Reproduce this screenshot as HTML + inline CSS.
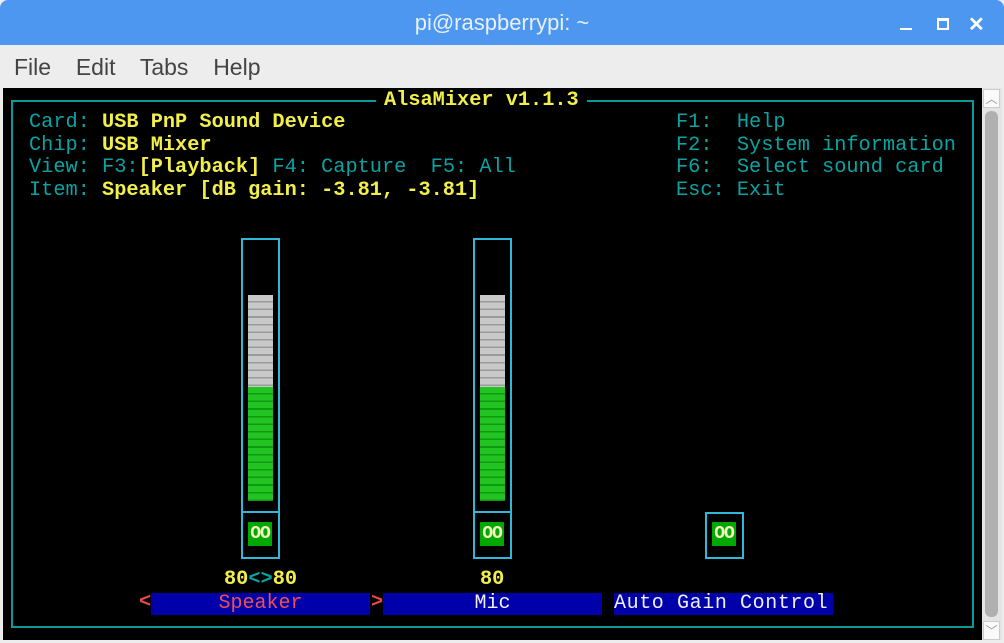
<!DOCTYPE html>
<html><head><meta charset="utf-8"><style>
*{margin:0;padding:0;box-sizing:border-box}
body{width:1004px;height:643px;position:relative;overflow:hidden;background:#ededed;font-family:"Liberation Sans",sans-serif}
.a{position:absolute}
.t{position:absolute;font-family:"Liberation Mono",monospace;font-size:20.3px;line-height:22.7px;white-space:pre}
.c{color:#0aa3a3}.y{color:#f2ee4a;font-weight:bold}
.box{position:absolute;border:2px solid #2fb8d8}
.gray{position:absolute;background:repeating-linear-gradient(to bottom,#c9c9c9 0,#c9c9c9 6px,#9a9a9a 6px,#9a9a9a 7.6px)}
.green{position:absolute;background:repeating-linear-gradient(to bottom,#22c422 0,#22c422 6px,#119911 6px,#119911 7.6px)}
.oo{position:absolute;background:#00a800;color:#f4f4c0;font-family:"Liberation Mono",monospace;font-size:18px;font-weight:bold;text-align:center;line-height:24px;width:24px;height:24px;letter-spacing:-1px}
.lbl{position:absolute;background:#0000aa;height:22px;font-family:"Liberation Mono",monospace;font-size:20px;line-height:22px;color:#f0f0f0;text-align:center;white-space:pre}
</style></head><body>
<div class="a" style="left:0;top:0;width:1004px;height:45px;background:#4d97f0;border-radius:8px 8px 0 0"></div>
<div class="a" style="left:0;top:10px;width:1004px;text-align:center;color:#e8f0fc;font-size:22px">pi@raspberrypi: ~</div>
<div class="a" style="left:900px;top:28px;width:12px;height:2px;background:#fff"></div>
<div class="a" style="left:937px;top:18px;width:12px;height:12px;border:2px solid #fff;border-top-width:3px"></div>
<div class="a" style="left:968px;top:12px;color:#fff;font-size:20px;font-weight:bold">✕</div>
<div class="a" style="left:14px;top:54px;font-size:23px;color:#444;word-spacing:6px">File&nbsp; Edit&nbsp; Tabs&nbsp; Help</div>
<div class="a" style="left:3px;top:88px;width:979px;height:552px;background:#000"></div>
<div class="a" style="left:982px;top:88px;width:20px;height:552px;background:#e4e4e4"></div>
<div class="a" style="left:983px;top:89px;width:17px;height:19px;background:#fafafa;border:1px solid #ccc;color:#999;font-size:12px;text-align:center;line-height:18px">︿</div>
<div class="a" style="left:985px;top:111px;width:13px;height:506px;background:#b0b0b0;border-radius:6px"></div>
<div class="a" style="left:983px;top:621px;width:17px;height:19px;background:#fafafa;border:1px solid #ccc;color:#999;font-size:12px;text-align:center;line-height:18px">﹀</div>
<div class="a" style="left:11px;top:100px;width:963px;height:528px;border:2px solid #0a9a9a"></div>
<div class="t y" style="left:376px;top:90px;background:#000;padding:0 8px">AlsaMixer v1.1.3</div>
<div class="t" style="left:29px;top:112px"><span class="c">Card: </span><span class="y">USB PnP Sound Device</span>
<span class="c">Chip: </span><span class="y">USB Mixer</span>
<span class="c">View: F3:</span><span class="y">[Playback]</span><span class="c"> F4: Capture  F5: All</span>
<span class="c">Item: </span><span class="y">Speaker [dB gain: -3.81, -3.81]</span></div>
<div class="t c" style="left:676px;top:112px">F1:  Help
F2:  System information
F6:  Select sound card
Esc: Exit</div>
<div class="box" style="left:241px;top:238px;width:39px;height:321px"></div>
<div class="a" style="left:241px;top:511px;width:39px;height:2px;background:#2fb8d8"></div>
<div class="gray" style="left:248px;top:295px;width:25px;height:92px"></div>
<div class="green" style="left:248px;top:387px;width:25px;height:114px"></div>
<div class="oo" style="left:248px;top:522px">OO</div>
<div class="box" style="left:473px;top:238px;width:39px;height:321px"></div>
<div class="a" style="left:473px;top:511px;width:39px;height:2px;background:#2fb8d8"></div>
<div class="gray" style="left:480px;top:295px;width:25px;height:92px"></div>
<div class="green" style="left:480px;top:387px;width:25px;height:114px"></div>
<div class="oo" style="left:480px;top:522px">OO</div>
<div class="box" style="left:705px;top:512px;width:39px;height:47px"></div>
<div class="oo" style="left:712px;top:522px">OO</div>
<div class="t y" style="left:224px;top:569px">80<span class="c">&lt;&gt;</span>80</div>
<div class="t y" style="left:480px;top:569px">80</div>
<div class="t" style="left:139px;top:592px;color:#e84848;font-weight:bold">&lt;</div>
<div class="lbl" style="left:151px;top:593px;width:219px;color:#ee5050">Speaker</div>
<div class="t" style="left:371px;top:592px;color:#e84848;font-weight:bold">&gt;</div>
<div class="lbl" style="left:383px;top:593px;width:219px">Mic</div>
<div class="lbl" style="left:614px;top:593px;width:219px;text-align:left;letter-spacing:0.6px">Auto Gain Control</div>
</body></html>
